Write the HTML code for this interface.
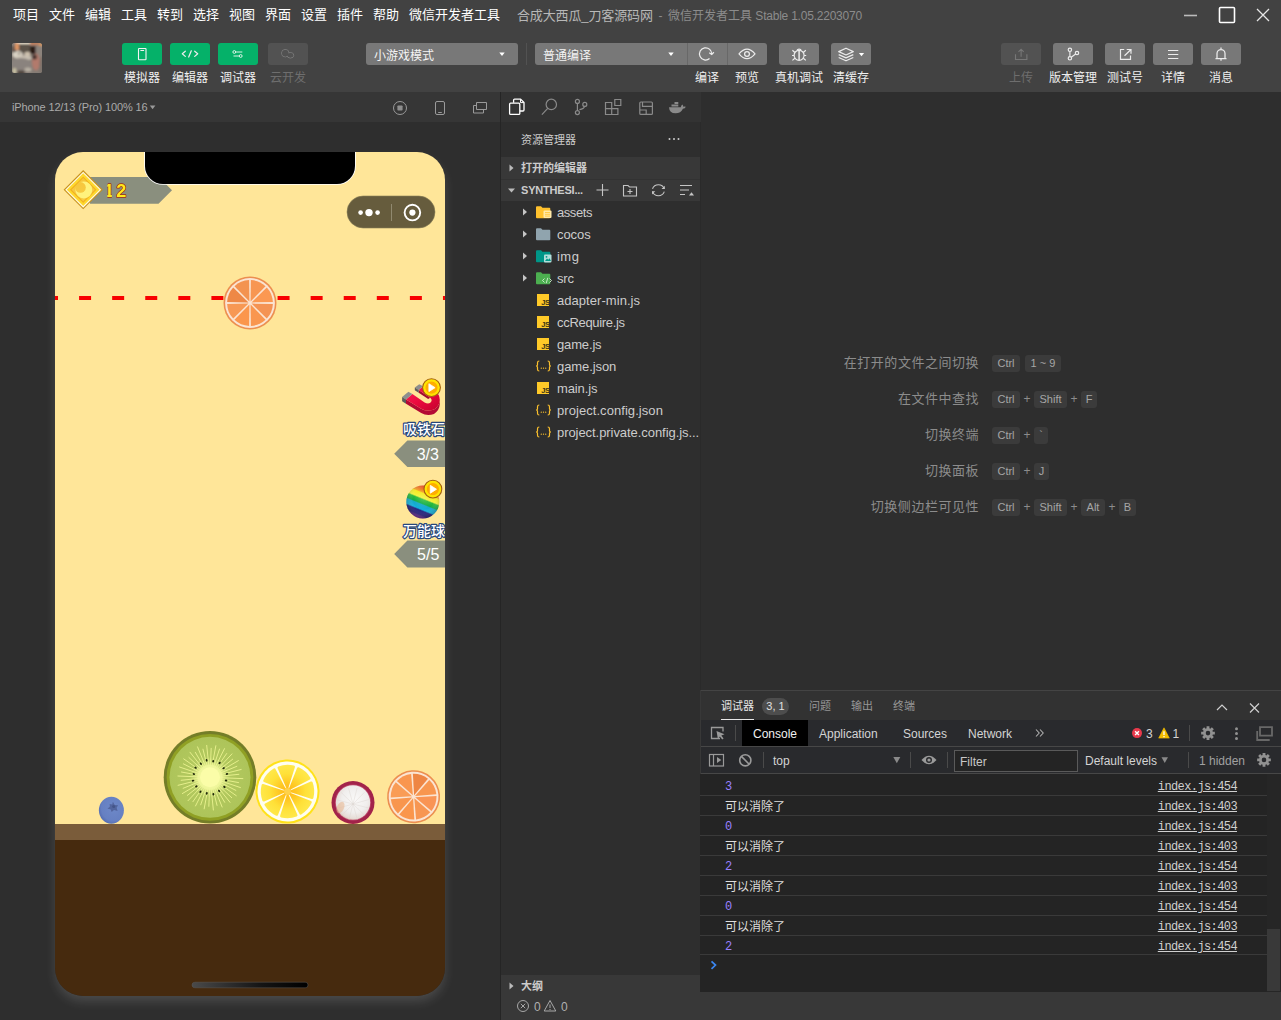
<!DOCTYPE html>
<html lang="zh-CN">
<head>
<meta charset="utf-8">
<title>微信开发者工具</title>
<style>
*{box-sizing:border-box;margin:0;padding:0}
html,body{width:1281px;height:1020px;overflow:hidden;background:#2e2e2e}
body{font-family:"Liberation Sans","Noto Sans CJK SC",sans-serif;font-size:12px;color:#ccc;position:relative}
svg{display:block;overflow:visible}
#top{position:absolute;left:0;top:0;width:1281px;height:92px;background:#424242}
.menu{position:absolute;top:0;height:30px;line-height:30px;font-size:13px;color:#fff;white-space:nowrap}
.title{position:absolute;top:1px;height:30px;line-height:30px;font-size:12px;color:#8c8c8c;white-space:nowrap}
.tb{position:absolute;top:43px;height:22px;width:40px;border-radius:3px;background:#787878}
.tb.g{background:#05b169}
.tb.d{background:#525252}
.tl{position:absolute;top:70px;height:16px;line-height:16px;font-size:12px;color:#f0f0f0;white-space:nowrap;transform:translateX(-50%)}
.tl.d{color:#6e6e6e}
.sel{position:absolute;top:43px;height:22px;background:#787878;color:#f4f4f4;font-size:12px;line-height:26px;padding-left:8px;white-space:nowrap}
.ic{position:absolute;left:0;top:0}
#sim{position:absolute;left:0;top:92px;width:500px;height:928px;background:#2e2e2e;overflow:hidden}
#simhead{position:absolute;left:0;top:0;width:500px;height:30px;background:#363636}
#vline{position:absolute;left:500px;top:92px;width:1px;height:928px;background:#252525}
#phone{position:absolute;left:55px;top:60px;width:390px;height:844px;border-radius:28px;overflow:hidden}
#phoneshadow{position:absolute;left:55px;top:60px;width:390px;height:844px;border-radius:28px;box-shadow:0 6px 12px -1px rgba(255,255,255,.15)}
#side{position:absolute;left:501px;top:92px;width:199px;height:928px;background:#2e2e2e}
#vline2{position:absolute;left:700px;top:122px;width:1px;height:568px;background:#2a2a2a}
#act{position:absolute;left:0;top:0;width:200px;height:30px;background:#333}
.sec{position:absolute;left:0;width:199px;height:22px;background:#383838;font-size:11px;font-weight:bold;color:#ccc;line-height:22px;white-space:nowrap}
.row{position:absolute;left:0;width:199px;height:22px;font-size:13px;letter-spacing:-.1px;color:#ccc;white-space:nowrap}
.row .t{position:absolute;left:56px;top:1px;line-height:22px}
#ed{position:absolute;left:701px;top:92px;width:580px;height:598px;background:#2e2e2e}
.wl{position:absolute;right:302px;height:20px;line-height:20px;font-size:13px;letter-spacing:.52px;color:#8c8c8c;white-space:nowrap}
.k{position:absolute;height:17px;line-height:17px;font-size:11px;color:#a6a6a6;background:#3b3b3b;border-radius:3px;text-align:center;white-space:nowrap}
.pl{position:absolute;height:17px;line-height:17px;font-size:12px;color:#8c8c8c;width:12px;text-align:center}
#dbg{position:absolute;left:700px;top:690px;width:581px;height:330px;background:#383838}
#dbgtabs{position:absolute;left:1px;top:0;width:580px;height:30px;background:#323232;border-top:1px solid #444}
#dt{position:absolute;left:1px;top:30px;width:580px;height:27px;background:#292a2d;border-bottom:1px solid #474747}
#ct{position:absolute;left:1px;top:57px;width:580px;height:27px;background:#292a2d;border-bottom:1px solid #474747}
#con{position:absolute;left:0;top:84px;width:581px;height:218px;background:#242424;overflow:hidden}
.cr{position:absolute;left:0;width:567px;height:20px;border-bottom:1px solid #3a3a3a;font-size:12px;line-height:19px;white-space:nowrap}
.cr .m{position:absolute;left:25px;top:2px;color:#dedede}
.cr .n{position:absolute;left:25px;top:2px;color:#9980ff;font-family:"Liberation Mono",monospace;font-size:12px;letter-spacing:-.6px}
.cr .l{position:absolute;right:30px;top:2px;color:#d0d0d0;text-decoration:underline;font-family:"Liberation Mono",monospace;font-size:12px;letter-spacing:-.6px}
</style>
</head>
<body>
<div id="top">
<span class="menu" style="left:13px">项目</span>
<span class="menu" style="left:49px">文件</span>
<span class="menu" style="left:85px">编辑</span>
<span class="menu" style="left:121px">工具</span>
<span class="menu" style="left:157px">转到</span>
<span class="menu" style="left:193px">选择</span>
<span class="menu" style="left:229px">视图</span>
<span class="menu" style="left:265px">界面</span>
<span class="menu" style="left:301px">设置</span>
<span class="menu" style="left:337px">插件</span>
<span class="menu" style="left:373px">帮助</span>
<span class="menu" style="left:409px">微信开发者工具</span>
<span class="title" style="left:517px;font-size:13px;letter-spacing:-.13px;color:#b8b8b8">合成大西瓜_刀客源码网</span><span class="title" style="left:658.5px">-</span><span class="title" style="left:668px">微信开发者工具 <span style="letter-spacing:-.22px">Stable 1.05.2203070</span></span>
<svg class="ic" width="1281" height="30" viewBox="0 0 1281 30">
<path d="M1184 15.5h13" stroke="#bbb" stroke-width="1.6" fill="none"/>
<rect x="1219.5" y="7.5" width="15" height="15" rx="1" stroke="#fff" stroke-width="1.6" fill="none"/>
<path d="M1257 9l12 12M1269 9l-12 12" stroke="#e6e6e6" stroke-width="1.3" fill="none"/>
</svg>
<div id="avatar" style="position:absolute;left:12px;top:43px;width:30px;height:30px;border-radius:2.5px;overflow:hidden;background:#857c75">
<svg width="30" height="30" viewBox="0 0 30 30">
<defs><filter id="avb" x="-30%" y="-30%" width="160%" height="160%"><feGaussianBlur stdDeviation="1"/></filter></defs>
<g filter="url(#avb)">
<rect x="-4" y="-4" width="38" height="38" fill="#857c75"/>
<rect x="6" y="1" width="12" height="9" fill="#5b534a"/>
<rect x="-2" y="3" width="6" height="6" fill="#6a5c52"/>
<rect x="4" y="-3" width="15" height="4" fill="#efe4d0"/>
<rect x="3" y="0" width="4" height="7" fill="#dc9464"/>
<rect x="18" y="-3" width="9" height="5" fill="#c0805e"/>
<rect x="27" y="0" width="5" height="4" fill="#d4965e"/>
<rect x="24" y="3" width="8" height="12" fill="#8c837b"/>
<rect x="18" y="3" width="5.5" height="8" fill="#2c1a18"/>
<ellipse cx="5.5" cy="11.5" rx="5" ry="3.8" fill="#d9d2c4"/>
<ellipse cx="15.5" cy="11" rx="3" ry="2.3" fill="#cdc1ae"/>
<ellipse cx="12" cy="15" rx="8" ry="2.5" fill="#c9c0b2"/>
<ellipse cx="9" cy="21" rx="11" ry="6" fill="#8a837e"/>
<ellipse cx="24" cy="19" rx="4" ry="8.5" fill="#b27a6c"/>
<ellipse cx="22.5" cy="14" rx="2.5" ry="2.5" fill="#4a3430"/>
<ellipse cx="29.5" cy="22" rx="2" ry="9" fill="#7c726a"/>
<ellipse cx="16" cy="26.5" rx="3.5" ry="2" fill="#b9b1a4"/>
<ellipse cx="2.5" cy="28" rx="2" ry="3" fill="#c9c2a4"/>
<ellipse cx="9" cy="29.5" rx="4" ry="2" fill="#4d433b"/>
<circle cx="7" cy="10.5" r=".9" fill="#5a5040"/>
<circle cx="3" cy="8" r="1.2" fill="#4a4240"/>
</g>
</svg>
</div>
<div class="tb g" style="left:122px"><svg class="ic" width="40" height="22" viewBox="0 0 40 22"><rect x="16.5" y="5.5" width="7.5" height="11.3" rx=".6" stroke="#f4f4f4" stroke-width="1.1" fill="none"/><path d="M18.4 7.5h3.7" stroke="#f4f4f4" stroke-width="1" fill="none"/></svg></div>
<div class="tb g" style="left:170px"><svg class="ic" width="40" height="22" viewBox="0 0 40 22"><path d="M15.3 8.2L12.3 10.8l3 2.6M24.7 8.2l3 2.6l-3 2.6M21.3 7.8l-2.6 6.2" stroke="#ececec" stroke-width="1.25" fill="none" stroke-linecap="round" stroke-linejoin="round"/></svg></div>
<div class="tb g" style="left:218px"><svg class="ic" width="40" height="22" viewBox="0 0 40 22"><path d="M17.8 9h6.5M15.5 13h5.6" stroke="#d9f3e6" stroke-width="1" fill="none"/><circle cx="16.3" cy="9" r="1.4" stroke="#d9f3e6" stroke-width="1" fill="none"/><circle cx="22.7" cy="13" r="1.4" stroke="#d9f3e6" stroke-width="1" fill="none"/></svg></div>
<div class="tb d" style="left:268px"><svg class="ic" width="40" height="22" viewBox="0 0 40 22"><g stroke="#7e7e7e" stroke-width="1" fill="none"><circle cx="17.3" cy="10.2" r="3.7"/><ellipse cx="22.4" cy="12.3" rx="3.3" ry="2.7"/></g><circle cx="17.3" cy="10.2" r="3.2" fill="#525252"/><ellipse cx="22.4" cy="12.3" rx="2.8" ry="2.2" fill="#525252"/></svg></div>
<span class="tl" style="left:142px">模拟器</span>
<span class="tl" style="left:190px">编辑器</span>
<span class="tl" style="left:238px">调试器</span>
<span class="tl d" style="left:288px">云开发</span>

<div class="sel" style="left:366px;width:152px;border-radius:3px">小游戏模式<svg class="ic" width="152" height="22" viewBox="0 0 152 22"><path d="M133.3 9.5h5.4l-2.7 3.6z" fill="#fff"/></svg></div>
<div style="position:absolute;left:526px;top:43px;width:1px;height:22px;background:#525252"></div>
<div class="sel" style="left:535px;width:152px;border-radius:3px 0 0 3px">普通编译<svg class="ic" width="152" height="22" viewBox="0 0 152 22"><path d="M133.3 9.5h5.4l-2.7 3.6z" fill="#fff"/></svg></div>
<div class="tb" style="left:687px;border-radius:0;border-left:1px solid #686868"><svg class="ic" width="40" height="22" viewBox="0 0 40 22" style="left:-1px"><path d="M22.52 15.57A6.1 6.1 0 1 1 24.69 11.38" stroke="#ececec" stroke-width="1.25" fill="none"/><path d="M22.29 9.68l2.4 1.8l2.2-2.2" stroke="#ececec" stroke-width="1.25" fill="none"/></svg></div>
<div class="tb" style="left:727px;border-radius:0 3px 3px 0;border-left:1px solid #686868"><svg class="ic" width="40" height="22" viewBox="0 0 40 22" style="left:-1px"><path d="M12 10.9q8-9.6 16 0q-8 9.6-16 0z" stroke="#ececec" stroke-width="1.25" fill="none" stroke-linejoin="round"/><circle cx="20" cy="10.9" r="2.4" stroke="#ececec" stroke-width="1.25" fill="none"/></svg></div>
<div class="tb" style="left:779px"><svg class="ic" width="40" height="22" viewBox="0 0 40 22"><g stroke="#ececec" stroke-width="1.2" fill="none"><circle cx="20.1" cy="12.3" r="5"/><path d="M17.9 7.7a2.3 2.3 0 0 1 4.4 0M15.9 9.5l-2.5-2.2M24.3 9.5l2.5-2.2M15.1 12.5h-2.1M25.1 12.5h2.1M15.9 15.3l-2.5 2.1M24.3 15.3l2.5 2.1"/><path d="M20.1 7.6v9.6" stroke-width="1.5"/></g></svg></div>
<div class="tb" style="left:831px"><svg class="ic" width="40" height="22" viewBox="0 0 40 22"><g stroke="#ececec" stroke-width="1.2" fill="none" stroke-linejoin="round"><path d="M15 5.2l7.3 3.4l-7.3 3.4l-7.3-3.4z"/><path d="M7.7 11.6l7.3 3.3l7.3-3.3M7.7 14.5l7.3 3.3l7.3-3.3"/></g><path d="M27.9 9.9h5.2l-2.6 3.3z" fill="#fff"/></svg></div>
<span class="tl" style="left:707px">编译</span>
<span class="tl" style="left:747px">预览</span>
<span class="tl" style="left:799px">真机调试</span>
<span class="tl" style="left:851px">清缓存</span>

<div class="tb d" style="left:1001px"><svg class="ic" width="40" height="22" viewBox="0 0 40 22"><path d="M14.5 11.2v5.3h11.4v-5.3M20.1 13.8v-7.5M17.5 8.9l2.6-2.7l2.6 2.7" stroke="#777" stroke-width="1.1" fill="none"/></svg></div>
<div class="tb" style="left:1053px"><svg class="ic" width="40" height="22" viewBox="0 0 40 22"><g stroke="#ececec" stroke-width="1.2" fill="none"><circle cx="16.9" cy="6.8" r="1.7"/><circle cx="16.9" cy="15.3" r="1.7"/><circle cx="24" cy="10" r="1.7"/><path d="M16.9 8.5v5.1M18.3 14.3l4.3-3.3"/></g></svg></div>
<div class="tb" style="left:1105px"><svg class="ic" width="40" height="22" viewBox="0 0 40 22"><path d="M19.2 6.5h-3.7v9.9h10v-3.9M21.7 6.5h4.3v4.2M25.7 6.8l-6.2 5.9" stroke="#ececec" stroke-width="1.2" fill="none"/></svg></div>
<div class="tb" style="left:1153px"><svg class="ic" width="40" height="22" viewBox="0 0 40 22"><path d="M15 7.5h10.3M15 11.5h10.3M15 15.5h10.3" stroke="#ececec" stroke-width="1" fill="none"/></svg></div>
<div class="tb" style="left:1201px"><svg class="ic" width="40" height="22" viewBox="0 0 40 22"><path d="M14.5 15.5h11M16 15.5v-5a4 4 0 0 1 8 0v5M20 4.5v2M20 15.5v2.3" stroke="#ececec" stroke-width="1.25" fill="none"/></svg></div>
<span class="tl d" style="left:1021px">上传</span>
<span class="tl" style="left:1073px">版本管理</span>
<span class="tl" style="left:1125px">测试号</span>
<span class="tl" style="left:1173px">详情</span>
<span class="tl" style="left:1221px">消息</span>
</div>
<div id="sim">
<div id="simhead">
<span style="position:absolute;left:12px;top:0;line-height:30px;font-size:11px;letter-spacing:-.13px;color:#aaa;white-space:nowrap">iPhone 12/13 (Pro) 100% 16</span>
<svg class="ic" width="500" height="30" viewBox="0 0 500 30" style="position:absolute;left:0;top:0">
<path d="M149.8 13.5h5.6l-2.8 3.8z" fill="#9a9a9a"/>
<circle cx="400" cy="16" r="6.5" stroke="#9a9a9a" stroke-width="1" fill="none"/><rect x="397.4" y="13.4" width="5.2" height="5.2" rx=".8" fill="#8e8e8e"/>
<rect x="435.5" y="9.5" width="9" height="13" rx="1.5" stroke="#9a9a9a" stroke-width="1" fill="none"/><path d="M438.2 20.5h3.6" stroke="#9a9a9a" stroke-width="1"/>
<path d="M476.5 10.5h10v7h-10zM476 13.5h-2.5v7.5h10v-3" stroke="#9a9a9a" stroke-width="1" fill="none" stroke-linejoin="round"/>
</svg>
</div>
<div id="phoneshadow"></div>
<div id="phone">
<svg id="game" width="390" height="844" viewBox="55 152 390 844" style="position:absolute;left:0;top:0">
<defs>
<radialGradient id="gLemon" cx="50%" cy="50%" r="50%"><stop offset="0" stop-color="#ffb616"/><stop offset="0.3" stop-color="#ffc823"/><stop offset="0.62" stop-color="#ffe139"/><stop offset="1" stop-color="#ffea4e"/></radialGradient>
<radialGradient id="gKiwi" cx="50%" cy="50%" r="50%"><stop offset="0" stop-color="#f6f9a4"/><stop offset="0.26" stop-color="#eef59a"/><stop offset="0.38" stop-color="#cbdb78"/><stop offset="0.5" stop-color="#b2c85e"/><stop offset="1" stop-color="#adc45a"/></radialGradient>
<radialGradient id="gMang" cx="55%" cy="42%" r="62%"><stop offset="0" stop-color="#faf9f8"/><stop offset="0.6" stop-color="#f0eeed"/><stop offset="0.88" stop-color="#e6dcd6"/><stop offset="1" stop-color="#d9b8a6"/></radialGradient>
<radialGradient id="gBlue" cx="58%" cy="42%" r="68%"><stop offset="0" stop-color="#6d88c8"/><stop offset="0.7" stop-color="#6680c2"/><stop offset="1" stop-color="#4c64aa"/></radialGradient>
<radialGradient id="gBadge" cx="50%" cy="50%" r="50%"><stop offset="0" stop-color="#ffb200"/><stop offset="0.62" stop-color="#ffab00"/><stop offset="0.72" stop-color="#ffe000"/><stop offset="1" stop-color="#ffee00"/></radialGradient>
<linearGradient id="gRain" gradientUnits="userSpaceOnUse" x1="428.9" y1="486.3" x2="416.5" y2="517.1"><stop offset="0" stop-color="#e62e2a"/><stop offset="0.155" stop-color="#ee7a28"/><stop offset="0.23" stop-color="#f4a42a"/><stop offset="0.26" stop-color="#f4ea20"/><stop offset="0.395" stop-color="#f2f23c"/><stop offset="0.44" stop-color="#2cb93a"/><stop offset="0.555" stop-color="#12ae44"/><stop offset="0.59" stop-color="#14a8c8"/><stop offset="0.725" stop-color="#10b0dc"/><stop offset="0.77" stop-color="#1e1c7a"/><stop offset="0.885" stop-color="#241a7c"/><stop offset="0.935" stop-color="#5a2890"/><stop offset="1" stop-color="#7a309e"/></linearGradient>
<radialGradient id="gRainS" cx="52%" cy="42%" r="62%"><stop offset="0" stop-color="#fff" stop-opacity=".14"/><stop offset="0.5" stop-color="#fff" stop-opacity="0"/><stop offset="1" stop-color="#000" stop-opacity=".38"/></radialGradient>
<linearGradient id="gMag" x1="0" y1="0" x2="1" y2="1"><stop offset="0" stop-color="#ff1e5a"/><stop offset="0.5" stop-color="#ea0a3e"/><stop offset="1" stop-color="#c4002c"/></linearGradient>
<linearGradient id="gHome" x1="0" y1="0" x2="1" y2="0"><stop offset="0" stop-color="#4a4a4a"/><stop offset="0.6" stop-color="#141414"/><stop offset="1" stop-color="#000"/></linearGradient>
<linearGradient id="gDia" x1="0" y1="0" x2="0" y2="1"><stop offset="0" stop-color="#f6c63c"/><stop offset="1" stop-color="#f8cc44"/></linearGradient>
</defs>
<rect x="55" y="152" width="390" height="672.5" fill="#ffe699"/>
<rect x="55" y="824" width="390" height="16" fill="#7a5c3a"/>
<rect x="55" y="840" width="390" height="156" fill="#462a0e"/>
<path d="M90 177H158.7L172 190.3L158.5 203.8H90z" fill="#8a8f7e"/>
<path d="M145 152V166a18 18 0 0 0 18 18H337a18 18 0 0 0 18-18V152" fill="none" stroke="#fff" stroke-width="1.7"/>
<path d="M145 152H355V166a18 18 0 0 1-18 18H163a18 18 0 0 1-18-18z" fill="#000"/>
<g transform="translate(83.2 189.7)">
<path d="M0 -19.6L19.6 0L0 19.6L-19.6 0z" fill="#c9921d"/>
<path d="M0 -18L18 0L0 18L-18 0z" fill="#fffbe6"/>
<path d="M0 -16.4L16.4 0L0 16.4L-16.4 0z" fill="#ffd92e"/>
<path d="M0 -13.3L13.3 0L0 13.3L-13.3 0z" fill="#f2b220"/>
<path d="M0 -11.6L11.6 0L0 11.6L-11.6 0z" fill="url(#gDia)"/>
<mask id="mm" maskUnits="userSpaceOnUse" x="-12" y="-12" width="24" height="24"><rect x="-12" y="-12" width="24" height="24" fill="#fff"/><circle cx="-2.7" cy="-2.3" r="5.3" fill="#000"/></mask>
<circle cx=".6" cy=".3" r="8.4" fill="#fff27c" mask="url(#mm)"/>
</g>
<mask id="m12" maskUnits="userSpaceOnUse" x="98" y="176" width="40" height="28"><rect x="98" y="176" width="40" height="28" fill="#fff"/><rect x="98" y="178" width="9.4" height="24" fill="#000"/><rect x="111.8" y="190" width="3.8" height="12" fill="#000"/></mask>
<text y="197.3" mask="url(#m12)" font-family="'Liberation Sans',sans-serif" font-weight="bold" font-size="18" fill="#ffe81c" stroke="#a02c12" stroke-width="1.4" paint-order="stroke" stroke-linejoin="round"><tspan x="104">1</tspan><tspan x="116.2">2</tspan></text>
<rect x="347" y="196" width="88" height="32" rx="16" fill="#665c3d" stroke="#8a8058" stroke-width=".6"/>
<rect x="391.2" y="204" width=".8" height="17" fill="#9c957c"/>
<circle cx="360.6" cy="212.6" r="2.3" fill="#fff"/><circle cx="369" cy="212.6" r="3.7" fill="#fff"/><circle cx="377.6" cy="212.6" r="2.3" fill="#fff"/>
<circle cx="412.4" cy="212.6" r="7.8" fill="none" stroke="#fff" stroke-width="1.9"/><circle cx="412.4" cy="212.6" r="3.1" fill="#fff"/>
<path d="M46 296h12v4h-12zM79.08 296h12v4h-12zM112.16 296h12v4h-12zM145.24 296h12v4h-12zM178.32 296h12v4h-12zM211.4 296h12v4h-12zM244.48 296h12v4h-12zM277.56 296h12v4h-12zM310.64 296h12v4h-12zM343.72 296h12v4h-12zM376.8 296h12v4h-12zM409.88 296h12v4h-12zM442.96 296h12v4h-12z" fill="#f80000"/>
<g transform="translate(250 303) rotate(0)"><circle r="26.5" fill="#ec8f50"/><circle r="24.9" fill="#fbe4d2"/><path d="M1.48 0.61L22.88 0.88A22.9 22.9 0 0 1 16.8 15.56z" fill="#f49354"/><path d="M0.61 1.48L15.56 16.8A22.9 22.9 0 0 1 0.88 22.88z" fill="#f9964f"/><path d="M-0.61 1.48L-0.88 22.88A22.9 22.9 0 0 1 -15.56 16.8z" fill="#fb964c"/><path d="M-1.48 0.61L-16.8 15.56A22.9 22.9 0 0 1 -22.88 0.88z" fill="#f79854"/><path d="M-1.48 -0.61L-22.88 -0.88A22.9 22.9 0 0 1 -16.8 -15.56z" fill="#ee8846"/><path d="M-0.61 -1.48L-15.56 -16.8A22.9 22.9 0 0 1 -0.88 -22.88z" fill="#f39350"/><path d="M0.61 -1.48L0.88 -22.88A22.9 22.9 0 0 1 15.56 -16.8z" fill="#f79652"/><path d="M1.48 -0.61L16.8 -15.56A22.9 22.9 0 0 1 22.88 -0.88z" fill="#fb9852"/></g>
<g id="magnet">
<path d="M406 399.4L421.2 408.7Q427 412 434 409.6Q439.5 406 439.8 400l0 4.3Q439.5 410.3 434 413.9Q427 416.3 421.2 413L406 403.7z" fill="#b30a34"/>
<path d="M418.7 390.1l0 2.6l9.5 6.3l2-1.3z" fill="#a00a30"/>
<path d="M406 399.4L421.2 408.7Q427 412 434 409.6Q439.5 406 439.8 400Q439.5 394 434.9 391.1L423.1 386.2L418.7 390.1L430.5 397.9Q433 400.5 430 403Q427.5 404 424.6 402.4L412.4 394z" fill="url(#gMag)"/>
<path d="M402.1 397L408.4 391.8L412.4 394L406 399.4z" fill="#8e8e8e"/><path d="M402.1 397L406 399.4V403.7L402.1 401.2z" fill="#5c5c5c"/>
<path d="M414.8 387.6L419.2 384.2L423.1 386.2L418.7 390.1z" fill="#8e8e8e"/><path d="M414.8 387.6L418.7 390.1V392.7L414.8 390.2z" fill="#5c5c5c"/>
</g>
<circle cx="431.5" cy="387.6" r="8.9" fill="url(#gBadge)" stroke="#a55f10" stroke-width="1.1"/><path d="M428.9 383.7v7.9l6.2-3.95z" fill="#fff" stroke="#fff" stroke-width=".8" stroke-linejoin="round"/>
<text x="424" y="433.5" text-anchor="middle" font-family="'Liberation Sans','Noto Sans CJK SC',sans-serif" font-weight="500" font-size="14" fill="#fff" stroke="#27477a" stroke-width="2.4" paint-order="stroke" stroke-linejoin="round">吸铁石</text>
<path d="M445 440.4H407.4L394.2 453.65L407.4 466.9H445z" fill="#8a8f7e"/>
<text x="427.8" y="459.6" text-anchor="middle" font-family="'Liberation Sans',sans-serif" font-size="16" fill="#fff">3/3</text>
<circle cx="422.8" cy="501.9" r="16.5" fill="url(#gRain)"/><circle cx="422.8" cy="501.9" r="16.5" fill="url(#gRainS)"/>
<circle cx="432.9" cy="489.1" r="8.9" fill="url(#gBadge)" stroke="#a55f10" stroke-width="1.1"/><path d="M430.3 485.3v7.9l6.2-3.95z" fill="#fff" stroke="#fff" stroke-width=".8" stroke-linejoin="round"/>
<text x="424" y="535.5" text-anchor="middle" font-family="'Liberation Sans','Noto Sans CJK SC',sans-serif" font-weight="500" font-size="14" fill="#fff" stroke="#27477a" stroke-width="2.4" paint-order="stroke" stroke-linejoin="round">万能球</text>
<path d="M445 540.4H407.4L394.2 553.95L407.4 567.5H445z" fill="#8a8f7e"/>
<text x="428.2" y="560" text-anchor="middle" font-family="'Liberation Sans',sans-serif" font-size="16" fill="#fff">5/5</text>
<g transform="translate(111.4 810.2)"><ellipse rx="12.5" ry="13.5" fill="url(#gBlue)"/><path d="M1.5 -8.5l1.8 3.2l3.4.3l-1.5 2.6l1 3.3l-3.6-1.2l-2.3 2l-1.2-2.6l-3-.6l2.4-2.3l-.3-2.5l2.6.6z" fill="#52659e"/><circle cx="2.3" cy="-3.6" r="1.5" fill="#435489"/></g>
<g transform="translate(210 777.3)">
<circle r="46.3" fill="#747d28"/>
<circle r="43.4" fill="#90a024"/>
<circle r="40.5" fill="url(#gKiwi)"/>
<path d="M10.99 0.44L32.87 1.32M10.82 2L28.52 5.27M10.42 3.52L30.41 10.27M9.82 4.97L25.88 13.09M9.01 6.31L26.29 18.42M8.02 7.53L21.72 20.4M6.87 8.59L20.03 25.08M5.57 9.48L14.69 25M4.17 10.18L12.16 29.71M2.67 10.67L7.05 28.13M1.13 10.94L3.38 32.73M-0.44 10.99L-1.16 28.98M-2 10.82L-5.84 31.57M-3.52 10.42L-9.28 27.48M-4.97 9.82L-14.49 28.64M-6.31 9.01L-17.1 24.41M-7.53 8.02L-21.97 23.4M-8.59 6.87L-22.66 18.1M-9.48 5.57L-27.68 16.26M-10.18 4.17L-26.84 10.98M-10.67 2.67L-31.91 8M-10.94 1.13L-28.85 2.98M-10.99 -0.44L-32.07 -1.28M-10.82 -2L-28.52 -5.27M-10.42 -3.52L-30.41 -10.27M-9.82 -4.97L-26.59 -13.45M-9.01 -6.31L-26.29 -18.42M-8.02 -7.53L-21.14 -19.85M-6.87 -8.59L-20.03 -25.08M-5.57 -9.48L-14.69 -25M-4.17 -10.18L-12.46 -30.45M-2.67 -10.67L-7.05 -28.13M-1.13 -10.94L-3.29 -31.93M0.44 -10.99L1.16 -28.98M2 -10.82L5.84 -31.57M3.52 -10.42L9.53 -28.23M4.97 -9.82L14.49 -28.64M6.31 -9.01L16.64 -23.75M7.53 -8.02L21.97 -23.4M8.59 -6.87L22.66 -18.1M9.48 -5.57L28.37 -16.67M10.18 -4.17L26.84 -10.98M10.67 -2.67L31.14 -7.8M10.94 -1.13L28.85 -2.98" stroke="#eef594" stroke-width=".85" fill="none" stroke-linecap="round"/>
<circle r="12.5" fill="#f2f89e" opacity=".6"/><circle r="10" fill="#fbfda8"/>
<g fill="#20280a"><ellipse cx="16.08" cy="3.2" rx="1.3" ry=".95" transform="rotate(11.25 16.08 3.2)"/><ellipse cx="14.38" cy="9.61" rx="1.3" ry=".95" transform="rotate(33.75 14.38 9.61)"/><ellipse cx="9.11" cy="13.64" rx="1.3" ry=".95" transform="rotate(56.25 9.11 13.64)"/><ellipse cx="3.38" cy="16.97" rx="1.3" ry=".95" transform="rotate(78.75 3.38 16.97)"/><ellipse cx="-3.2" cy="16.08" rx="1.3" ry=".95" transform="rotate(101.25 -3.2 16.08)"/><ellipse cx="-9.61" cy="14.38" rx="1.3" ry=".95" transform="rotate(123.75 -9.61 14.38)"/><ellipse cx="-13.64" cy="9.11" rx="1.3" ry=".95" transform="rotate(146.25 -13.64 9.11)"/><ellipse cx="-16.97" cy="3.38" rx="1.3" ry=".95" transform="rotate(168.75 -16.97 3.38)"/><ellipse cx="-16.08" cy="-3.2" rx="1.3" ry=".95" transform="rotate(191.25 -16.08 -3.2)"/><ellipse cx="-14.38" cy="-9.61" rx="1.3" ry=".95" transform="rotate(213.75 -14.38 -9.61)"/><ellipse cx="-9.11" cy="-13.64" rx="1.3" ry=".95" transform="rotate(236.25 -9.11 -13.64)"/><ellipse cx="-3.38" cy="-16.97" rx="1.3" ry=".95" transform="rotate(258.75 -3.38 -16.97)"/><ellipse cx="3.2" cy="-16.08" rx="1.3" ry=".95" transform="rotate(281.25 3.2 -16.08)"/><ellipse cx="9.61" cy="-14.38" rx="1.3" ry=".95" transform="rotate(303.75 9.61 -14.38)"/><ellipse cx="13.64" cy="-9.11" rx="1.3" ry=".95" transform="rotate(326.25 13.64 -9.11)"/><ellipse cx="16.97" cy="-3.38" rx="1.3" ry=".95" transform="rotate(348.75 16.97 -3.38)"/></g>
</g>
<g transform="translate(287.5 791.5) rotate(-3)">
<circle r="32" fill="#ffe21a"/>
<circle r="30" fill="#fffef0"/>
<mask id="ml" maskUnits="userSpaceOnUse" x="-32" y="-32" width="64" height="64"><path d="M4.5 0L24.29 -7.43A25.4 25.4 0 0 1 24.29 7.43zM3.18 3.18L22.43 11.92A25.4 25.4 0 0 1 11.92 22.43zM0 4.5L7.43 24.29A25.4 25.4 0 0 1 -7.43 24.29zM-3.18 3.18L-11.92 22.43A25.4 25.4 0 0 1 -22.43 11.92zM-4.5 0L-24.29 7.43A25.4 25.4 0 0 1 -24.29 -7.43zM-3.18 -3.18L-22.43 -11.92A25.4 25.4 0 0 1 -11.92 -22.43zM0 -4.5L-7.43 -24.29A25.4 25.4 0 0 1 7.43 -24.29zM3.18 -3.18L11.92 -22.43A25.4 25.4 0 0 1 22.43 -11.92z" fill="#fff" stroke="#fff" stroke-width="2.6" stroke-linejoin="round"/></mask>
<circle r="4" fill="#ffd24a"/>
<circle r="29" fill="url(#gLemon)" mask="url(#ml)"/>
</g>
<g transform="translate(353 802.5)">
<circle r="21.5" fill="#a2234a"/>
<circle r="18" fill="#bf4a6e"/>
<circle r="17.2" fill="url(#gMang)"/>
<path d="M0 1.5L15.99 5.58M0 1.5L11.8 13.03M0 1.5L4.46 17.39M0 1.5L-4.08 17.49M0 1.5L-11.53 13.3M0 1.5L-15.89 5.96M0 1.5L-15.99 -2.58M0 1.5L-11.8 -10.03M0 1.5L-4.46 -14.39M0 1.5L4.08 -14.49M0 1.5L11.53 -10.3M0 1.5L15.89 -2.96" stroke="#dcd4d0" stroke-width=".7" fill="none" opacity=".6"/>
<ellipse cx="-12.5" cy="5" rx="3.5" ry="6" fill="#e8b48c" opacity=".55" transform="rotate(25 -12.5 5)"/>
</g>
<g transform="translate(413.6 796.7) rotate(-4)"><circle r="26.5" fill="#ec8f50"/><circle r="24.9" fill="#fbe4d2"/><path d="M1.48 0.61L22.88 0.88A22.9 22.9 0 0 1 16.8 15.56z" fill="#f99454"/><path d="M0.61 1.48L15.56 16.8A22.9 22.9 0 0 1 0.88 22.88z" fill="#f79652"/><path d="M-0.61 1.48L-0.88 22.88A22.9 22.9 0 0 1 -15.56 16.8z" fill="#fa964c"/><path d="M-1.48 0.61L-16.8 15.56A22.9 22.9 0 0 1 -22.88 0.88z" fill="#f8964e"/><path d="M-1.48 -0.61L-22.88 -0.88A22.9 22.9 0 0 1 -16.8 -15.56z" fill="#f99c56"/><path d="M-0.61 -1.48L-15.56 -16.8A22.9 22.9 0 0 1 -0.88 -22.88z" fill="#f9964f"/><path d="M0.61 -1.48L0.88 -22.88A22.9 22.9 0 0 1 15.56 -16.8z" fill="#ee8644"/><path d="M1.48 -0.61L16.8 -15.56A22.9 22.9 0 0 1 22.88 -0.88z" fill="#f8964f"/></g>
<rect x="192" y="982.2" width="116" height="5.6" rx="2.8" fill="url(#gHome)" stroke="#5a5a5a" stroke-width=".5"/>
</svg>
</div>
</div>
<div id="vline"></div>
<div id="vline2"></div>
<div id="side">
<div id="act">
<svg class="ic" width="199" height="30" viewBox="0 0 199 30">
<g fill="none" stroke="#fff" stroke-width="1.3" stroke-linejoin="round">
<path d="M12.6 10.8v-2.7a1 1 0 0 1 1-1h6l3.4 3.4v7.5a1 1 0 0 1-1 1h-3.2"/>
<path d="M19.5 7.3v3.3h3.3" stroke-width="1"/>
<path d="M9.6 11.2h8.2a1 1 0 0 1 1 1v9.2a1 1 0 0 1-1 1h-8.2a1 1 0 0 1-1-1v-9.2a1 1 0 0 1 1-1z" fill="#333"/>
</g>
<g fill="none" stroke="#8a8a8a" stroke-width="1.2">
<circle cx="50.3" cy="12.4" r="5.2"/><path d="M46.7 16.3l-5.8 6.4"/>
<circle cx="76.4" cy="9.4" r="2"/><circle cx="76.4" cy="20.6" r="2"/><circle cx="83.8" cy="12.4" r="2"/><path d="M76.4 11.4v7.2M83.6 14.4q-.6 2.6-5.2 3.2"/>
<path d="M104.5 10.5h6.2v6.2h-6.2zM104.5 16.7h6.2v5.8h-6.2zM110.7 16.7h6.2v5.8h-6.2zM113.8 7.5h6v6h-6z"/>
<rect x="138.8" y="10" width="12.6" height="12.4" rx="1"/><path d="M141.5 10v4.3h9.9M138.8 18h6.4v4.4"/>
</g>
<path d="M168 15.2h11.8q.2-1.8 1.5-2.8q1 1 1 2.3q1.3-.6 2.5 0q-.6 1.8-2.9 2q-2 4.5-7.4 4.5q-6.2 0-6.5-6zM170.5 12.5h6.8v2h-6.8zM173.5 10h3.8v2h-3.8z" fill="#8a8a8a"/>
</svg>
</div>
<span style="position:absolute;left:20px;top:37px;line-height:22px;font-size:11px;color:#ccc;white-space:nowrap">资源管理器</span>
<svg class="ic" width="200" height="60" viewBox="0 0 200 60" style="top:30px"><circle cx="168.5" cy="17" r="1" fill="#ccc"/><circle cx="173" cy="17" r="1" fill="#ccc"/><circle cx="177.5" cy="17" r="1" fill="#ccc"/></svg>

<div class="sec" style="top:65px"><svg class="ic" width="199" height="22" viewBox="0 0 199 22"><path d="M8.5 7.5l4 3.5l-4 3.5z" fill="#bbb"/></svg><span style="position:absolute;left:20px;top:0">打开的编辑器</span></div>
<div style="position:absolute;left:0;top:87px;width:199px;height:1px;background:#2a2a2a"></div>
<div class="sec" style="top:87px;height:22px;border-top:1px solid #323232"><svg class="ic" width="199" height="22" viewBox="0 0 199 22" style="top:-1px">
<path d="M7 9.5h7l-3.5 4z" fill="#bbb"/>
<g fill="none" stroke="#c5c5c5" stroke-width="1.1">
<path d="M101.5 5v12M95.5 11h12"/>
<path d="M122.5 6.5h4.5l1.5 1.5h7v9h-13zM129 10v5M126.5 12.5h5"/>
<path d="M163.3 9.8a6.3 6.3 0 0 0-11.8 0M151.5 12.6a6.3 6.3 0 0 0 11.8 0"/>
<path d="M179 6.5h12M179 11h9M179 15.5h5"/>
</g>
<path d="M163.8 6.8v3.3h-3.3zM151 15.6v-3.3h3.3z" fill="#c5c5c5"/>
<path d="M188 16.5h5l-2.5-3.2z" fill="#c5c5c5"/>
</svg><span style="position:absolute;left:20px;top:-1px;letter-spacing:-.2px">SYNTHESI...</span></div>

<div class="row" style="top:109px"><svg class="ic" width="199" height="22" viewBox="0 0 199 22"><path d="M22 7.5l4 3.5l-4 3.5z" fill="#c5c5c5"/><path d="M35 6.2a1 1 0 0 1 1-1h4l1.5 1.5h6.8a1 1 0 0 1 1 1v8.5a1 1 0 0 1-1 1h-12.3a1 1 0 0 1-1-1z" fill="#ffc12d"/><rect x="42.5" y="9.5" width="8" height="7.5" rx="1" fill="#ffe9a8"/><path d="M44 11.5h5M44 13.3h5M44 15.1h5" stroke="#ffc12d" stroke-width=".8"/></svg><span class="t" style="letter-spacing:-0.43px">assets</span></div>
<div class="row" style="top:131px"><svg class="ic" width="199" height="22" viewBox="0 0 199 22"><path d="M22 7.5l4 3.5l-4 3.5z" fill="#c5c5c5"/><path d="M35 6.2a1 1 0 0 1 1-1h4l1.5 1.5h6.8a1 1 0 0 1 1 1v8.5a1 1 0 0 1-1 1h-12.3a1 1 0 0 1-1-1z" fill="#90a4ae"/></svg><span class="t" style="letter-spacing:-0.07px">cocos</span></div>
<div class="row" style="top:153px"><svg class="ic" width="199" height="22" viewBox="0 0 199 22"><path d="M22 7.5l4 3.5l-4 3.5z" fill="#c5c5c5"/><path d="M35 6.2a1 1 0 0 1 1-1h4l1.5 1.5h6.8a1 1 0 0 1 1 1v8.5a1 1 0 0 1-1 1h-12.3a1 1 0 0 1-1-1z" fill="#009688"/><rect x="43" y="9.5" width="7.5" height="8" rx="1" fill="#b2dfdb"/><path d="M44 16l2-2.5l1.3 1.3l1.2-1.5l1.5 2.7z" fill="#009688"/><circle cx="45.5" cy="11.8" r=".9" fill="#009688"/></svg><span class="t" style="letter-spacing:0.48px">img</span></div>
<div class="row" style="top:175px"><svg class="ic" width="199" height="22" viewBox="0 0 199 22"><path d="M22 7.5l4 3.5l-4 3.5z" fill="#c5c5c5"/><path d="M35 6.2a1 1 0 0 1 1-1h4l1.5 1.5h6.8a1 1 0 0 1 1 1v8.5a1 1 0 0 1-1 1h-12.3a1 1 0 0 1-1-1z" fill="#4caf50"/><path d="M43.5 11.5l-2 2l2 2M48.5 11.5l2 2l-2 2M46.8 10.8l-1.6 5.4" stroke="#d6f0d6" stroke-width=".9" fill="none"/></svg><span class="t" style="letter-spacing:-0.21px">src</span></div>
<div class="row" style="top:197px"><svg class="ic" width="199" height="22" viewBox="0 0 199 22"><rect x="36" y="5" width="12" height="12" fill="#ffca28"/><text x="40.2" y="16.2" font-family="'Liberation Sans',sans-serif" font-weight="bold" font-size="7.5" letter-spacing="-.3" fill="#3b3415">JS</text></svg><span class="t" style="letter-spacing:0.05px">adapter-min.js</span></div>
<div class="row" style="top:219px"><svg class="ic" width="199" height="22" viewBox="0 0 199 22"><rect x="36" y="5" width="12" height="12" fill="#ffca28"/><text x="40.2" y="16.2" font-family="'Liberation Sans',sans-serif" font-weight="bold" font-size="7.5" letter-spacing="-.3" fill="#3b3415">JS</text></svg><span class="t" style="letter-spacing:-0.31px">ccRequire.js</span></div>
<div class="row" style="top:241px"><svg class="ic" width="199" height="22" viewBox="0 0 199 22"><rect x="36" y="5" width="12" height="12" fill="#ffca28"/><text x="40.2" y="16.2" font-family="'Liberation Sans',sans-serif" font-weight="bold" font-size="7.5" letter-spacing="-.3" fill="#3b3415">JS</text></svg><span class="t" style="letter-spacing:-0.15px">game.js</span></div>
<div class="row" style="top:263px"><svg class="ic" width="199" height="22" viewBox="0 0 199 22"><path d="M38.3 6q-1.8 0-1.8 1.8v1.9q0 1.3-1.4 1.3q1.4 0 1.4 1.3v1.9q0 1.8 1.8 1.8M46.7 6q1.8 0 1.8 1.8v1.9q0 1.3 1.4 1.3q-1.4 0-1.4 1.3v1.9q0 1.8-1.8 1.8" stroke="#fbc02d" stroke-width="1.2" fill="none"/><circle cx="40.3" cy="13.2" r=".65" fill="#fbc02d"/><circle cx="42.5" cy="13.2" r=".65" fill="#fbc02d"/><circle cx="44.7" cy="13.2" r=".65" fill="#fbc02d"/></svg><span class="t" style="letter-spacing:-0.08px">game.json</span></div>
<div class="row" style="top:285px"><svg class="ic" width="199" height="22" viewBox="0 0 199 22"><rect x="36" y="5" width="12" height="12" fill="#ffca28"/><text x="40.2" y="16.2" font-family="'Liberation Sans',sans-serif" font-weight="bold" font-size="7.5" letter-spacing="-.3" fill="#3b3415">JS</text></svg><span class="t" style="letter-spacing:-0.11px">main.js</span></div>
<div class="row" style="top:307px"><svg class="ic" width="199" height="22" viewBox="0 0 199 22"><path d="M38.3 6q-1.8 0-1.8 1.8v1.9q0 1.3-1.4 1.3q1.4 0 1.4 1.3v1.9q0 1.8 1.8 1.8M46.7 6q1.8 0 1.8 1.8v1.9q0 1.3 1.4 1.3q-1.4 0-1.4 1.3v1.9q0 1.8-1.8 1.8" stroke="#fbc02d" stroke-width="1.2" fill="none"/><circle cx="40.3" cy="13.2" r=".65" fill="#fbc02d"/><circle cx="42.5" cy="13.2" r=".65" fill="#fbc02d"/><circle cx="44.7" cy="13.2" r=".65" fill="#fbc02d"/></svg><span class="t" style="letter-spacing:0.06px">project.config.json</span></div>
<div class="row" style="top:329px"><svg class="ic" width="199" height="22" viewBox="0 0 199 22"><path d="M38.3 6q-1.8 0-1.8 1.8v1.9q0 1.3-1.4 1.3q1.4 0 1.4 1.3v1.9q0 1.8 1.8 1.8M46.7 6q1.8 0 1.8 1.8v1.9q0 1.3 1.4 1.3q-1.4 0-1.4 1.3v1.9q0 1.8-1.8 1.8" stroke="#fbc02d" stroke-width="1.2" fill="none"/><circle cx="40.3" cy="13.2" r=".65" fill="#fbc02d"/><circle cx="42.5" cy="13.2" r=".65" fill="#fbc02d"/><circle cx="44.7" cy="13.2" r=".65" fill="#fbc02d"/></svg><span class="t" style="letter-spacing:-0.06px">project.private.config.js...</span></div>

<div class="sec" style="top:883px;height:22px"><svg class="ic" width="199" height="22" viewBox="0 0 199 22"><path d="M8.5 7.5l4 3.5l-4 3.5z" fill="#bbb"/></svg><span style="position:absolute;left:20px;top:0">大纲</span></div>
<div style="position:absolute;left:0;top:905px;width:199px;height:23px;background:#383838">
<svg class="ic" width="199" height="23" viewBox="0 0 199 23" style="top:-1.8px"><g fill="none" stroke="#a8a8a8" stroke-width="1"><circle cx="22" cy="11" r="5.5"/><path d="M19.8 8.8l4.4 4.4M24.2 8.8l-4.4 4.4"/><path d="M49 5.5l5.8 10.5h-11.6zM49 9.5v3.5M49 14v1"/></g></svg>
<span style="position:absolute;left:33px;top:-1px;line-height:22px;font-size:12px;color:#b0b0b0">0</span>
<span style="position:absolute;left:60px;top:-1px;line-height:22px;font-size:12px;color:#b0b0b0">0</span>
</div>
</div>
<div id="ed">
<span class="wl" style="top:261px">在打开的文件之间切换</span>
<span class="k" style="left:291px;top:263px;width:28px">Ctrl</span>
<span class="k" style="left:324px;top:263px;width:36px">1 ~ 9</span>

<span class="wl" style="top:297px">在文件中查找</span>
<span class="k" style="left:291px;top:299px;width:28px">Ctrl</span>
<span class="pl" style="left:320px;top:299px">+</span>
<span class="k" style="left:333px;top:299px;width:33px">Shift</span>
<span class="pl" style="left:367px;top:299px">+</span>
<span class="k" style="left:380px;top:299px;width:16px">F</span>

<span class="wl" style="top:333px">切换终端</span>
<span class="k" style="left:291px;top:335px;width:28px">Ctrl</span>
<span class="pl" style="left:320px;top:335px">+</span>
<span class="k" style="left:333px;top:335px;width:14px">`</span>

<span class="wl" style="top:369px">切换面板</span>
<span class="k" style="left:291px;top:371px;width:28px">Ctrl</span>
<span class="pl" style="left:320px;top:371px">+</span>
<span class="k" style="left:333px;top:371px;width:15px">J</span>

<span class="wl" style="top:405px">切换侧边栏可见性</span>
<span class="k" style="left:291px;top:407px;width:28px">Ctrl</span>
<span class="pl" style="left:320px;top:407px">+</span>
<span class="k" style="left:333px;top:407px;width:33px">Shift</span>
<span class="pl" style="left:367px;top:407px">+</span>
<span class="k" style="left:380px;top:407px;width:24px">Alt</span>
<span class="pl" style="left:405px;top:407px">+</span>
<span class="k" style="left:418px;top:407px;width:17px">B</span>
</div>
<div id="dbg">
<div id="dbgtabs">
<span style="position:absolute;left:20px;top:5px;line-height:20px;font-size:11px;color:#e7e7e7;white-space:nowrap">调试器</span>
<div style="position:absolute;left:20px;top:28px;width:33px;height:1px;background:#e7e7e7"></div>
<span style="position:absolute;left:61px;top:7px;width:27px;height:17px;border-radius:9px;background:#4d4d4d;color:#e0e0e0;font-size:11px;line-height:17px;text-align:center;white-space:nowrap">3, 1</span>
<span style="position:absolute;left:108px;top:5px;line-height:20px;font-size:11px;color:#969696;white-space:nowrap">问题</span>
<span style="position:absolute;left:150px;top:5px;line-height:20px;font-size:11px;color:#969696;white-space:nowrap">输出</span>
<span style="position:absolute;left:192px;top:5px;line-height:20px;font-size:11px;color:#969696;white-space:nowrap">终端</span>
<svg class="ic" width="580" height="30" viewBox="0 0 580 30" style="position:absolute;left:0;top:-1px"><path d="M516 20l5-5l5 5" stroke="#d0d0d0" stroke-width="1.2" fill="none"/><path d="M549 13.5l9 9M558 13.5l-9 9" stroke="#d0d0d0" stroke-width="1.2" fill="none"/></svg>
</div>
<div id="dt">
<svg class="ic" width="580" height="26" viewBox="0 0 580 26">
<path d="M19 18.5h-8.5v-11h11.5v4" fill="none" stroke="#9a9a9a" stroke-width="1.3"/>
<path d="M15.5 11l8 3.3l-3.2 1.2l2.3 2.9l-1.4 1.1l-2.3-2.9l-2 2.5z" fill="#9a9a9a"/>
<path d="M34.5 5v16" stroke="#4a4a4a" stroke-width="1"/>
<path d="M335 9.5l3.2 3.5l-3.2 3.5M339 9.5l3.2 3.5l-3.2 3.5" stroke="#b0b0b0" stroke-width="1.1" fill="none"/>
<circle cx="436" cy="13.1" r="5" fill="#e8394b"/><path d="M434.1 11.2l3.8 3.8M437.9 11.2l-3.8 3.8" stroke="#fff" stroke-width="1.4"/>
<path d="M463 7.8l5.3 10.3h-10.6z" fill="#f4bd00" stroke="#f4bd00" stroke-width=".6" stroke-linejoin="round"/><path d="M463 11.3v3.7M463 16v1.3" stroke="#fff" stroke-width="1.3"/>
<path d="M488.5 5v16" stroke="#4a4a4a" stroke-width="1"/>
<path transform="translate(507 13.1)" fill-rule="evenodd" fill="#919191" d="M4.79 -1.43L6.85 -1.42L6.85 1.42L4.79 1.43L4.4 2.37L5.85 3.84L3.84 5.85L2.37 4.4L1.43 4.79L1.42 6.85L-1.42 6.85L-1.43 4.79L-2.37 4.4L-3.84 5.85L-5.85 3.84L-4.4 2.37L-4.79 1.43L-6.85 1.42L-6.85 -1.42L-4.79 -1.43L-4.4 -2.37L-5.85 -3.84L-3.84 -5.85L-2.37 -4.4L-1.43 -4.79L-1.42 -6.85L1.42 -6.85L1.43 -4.79L2.37 -4.4L3.84 -5.85L5.85 -3.84L4.4 -2.37zM2.3 0a2.3 2.3 0 1 0-4.6 0a2.3 2.3 0 1 0 4.6 0z"/>
<circle cx="535.5" cy="8.7" r="1.5" fill="#919191"/><circle cx="535.5" cy="13.5" r="1.5" fill="#919191"/><circle cx="535.5" cy="18.4" r="1.5" fill="#919191"/>
<path d="M559 7.2h12v8.5h-12z" fill="none" stroke="#686868" stroke-width="1.8"/><path d="M556.2 11v9h12.5" fill="none" stroke="#686868" stroke-width="1.8"/>
</svg>
<span style="position:absolute;left:41px;top:0;width:66px;height:26px;background:#000;color:#f0f0f0;font-size:12px;line-height:28px;text-align:center">Console</span>
<span style="position:absolute;left:118px;top:1px;line-height:26px;font-size:12px;color:#d4d4d4;white-space:nowrap">Application</span>
<span style="position:absolute;left:202px;top:1px;line-height:26px;font-size:12px;color:#d4d4d4;white-space:nowrap">Sources</span>
<span style="position:absolute;left:267px;top:1px;line-height:26px;font-size:12px;color:#d4d4d4;white-space:nowrap">Network</span>
<span style="position:absolute;left:445px;top:1px;line-height:26px;font-size:12px;color:#d4d4d4;white-space:nowrap">3</span>
<span style="position:absolute;left:471.5px;top:1px;line-height:26px;font-size:12px;color:#d4d4d4;white-space:nowrap">1</span>
</div>
<div id="ct">
<svg class="ic" width="580" height="26" viewBox="0 0 580 26">
<g fill="none" stroke="#9a9a9a" stroke-width="1.2"><rect x="8.5" y="7.5" width="14" height="11.5"/><path d="M12.5 7.5v11.5"/></g>
<g fill="none" stroke="#9a9a9a" stroke-width="1.6"><circle cx="44.3" cy="13.3" r="5.6"/><path d="M40.4 9.4l7.8 7.8"/></g>
<path d="M16 10l4.3 3l-4.3 3z" fill="#9a9a9a"/>
<path d="M62.5 5v16M209.5 5v16M246.5 5v16M487.5 5v16" stroke="#4a4a4a" stroke-width="1"/>
<path d="M192.3 10h7l-3.5 6.2z" fill="#8a8a8a"/>
<path d="M220.5 13q7.5-8.5 15 0q-7.5 8.5-15 0z" fill="#9a9a9a"/><circle cx="228" cy="13" r="3" fill="#292a2d"/><circle cx="228" cy="13" r="1.6" fill="#9a9a9a"/>
<rect x="253.5" y="3.5" width="123" height="21" fill="#242424" stroke="#5a5a5a" stroke-width="1"/>
<path d="M460.5 10.2h6.5l-3.25 5.8z" fill="#8a8a8a"/>
<path transform="translate(563 12.9)" fill-rule="evenodd" fill="#919191" d="M4.79 -1.43L6.85 -1.42L6.85 1.42L4.79 1.43L4.4 2.37L5.85 3.84L3.84 5.85L2.37 4.4L1.43 4.79L1.42 6.85L-1.42 6.85L-1.43 4.79L-2.37 4.4L-3.84 5.85L-5.85 3.84L-4.4 2.37L-4.79 1.43L-6.85 1.42L-6.85 -1.42L-4.79 -1.43L-4.4 -2.37L-5.85 -3.84L-3.84 -5.85L-2.37 -4.4L-1.43 -4.79L-1.42 -6.85L1.42 -6.85L1.43 -4.79L2.37 -4.4L3.84 -5.85L5.85 -3.84L4.4 -2.37zM2.3 0a2.3 2.3 0 1 0-4.6 0a2.3 2.3 0 1 0 4.6 0z"/>
</svg>
<span style="position:absolute;left:72px;top:1px;line-height:26px;font-size:12px;color:#d4d4d4;white-space:nowrap">top</span>
<span style="position:absolute;left:259px;top:2px;line-height:26px;font-size:12px;color:#c8c8c8;white-space:nowrap">Filter</span>
<span style="position:absolute;left:384px;top:1px;line-height:26px;font-size:12px;color:#d4d4d4;white-space:nowrap">Default levels</span>
<span style="position:absolute;left:498px;top:1px;line-height:26px;font-size:12px;color:#a0a0a0;white-space:nowrap">1 hidden</span>
</div>
<div id="con">
<div class="cr" style="top:2px"><span class="n">3</span><span class="l">index.js:454</span></div>
<div class="cr" style="top:22px"><span class="m">可以消除了</span><span class="l">index.js:403</span></div>
<div class="cr" style="top:42px"><span class="n">0</span><span class="l">index.js:454</span></div>
<div class="cr" style="top:62px"><span class="m">可以消除了</span><span class="l">index.js:403</span></div>
<div class="cr" style="top:82px"><span class="n">2</span><span class="l">index.js:454</span></div>
<div class="cr" style="top:102px"><span class="m">可以消除了</span><span class="l">index.js:403</span></div>
<div class="cr" style="top:122px"><span class="n">0</span><span class="l">index.js:454</span></div>
<div class="cr" style="top:142px"><span class="m">可以消除了</span><span class="l">index.js:403</span></div>
<div class="cr" style="top:162px;height:19px"><span class="n">2</span><span class="l">index.js:454</span></div>
<svg class="ic" width="581" height="218" viewBox="0 0 581 218" style="position:absolute;left:0;top:0"><path d="M11.5 187.3l4 3.8l-4 3.8" stroke="#3b86f0" stroke-width="1.7" fill="none"/><rect x="567" y="0" width="14" height="218" fill="#262626"/><rect x="567" y="155" width="13" height="62" fill="#393939"/></svg>
</div>
</div>
</body>
</html>
